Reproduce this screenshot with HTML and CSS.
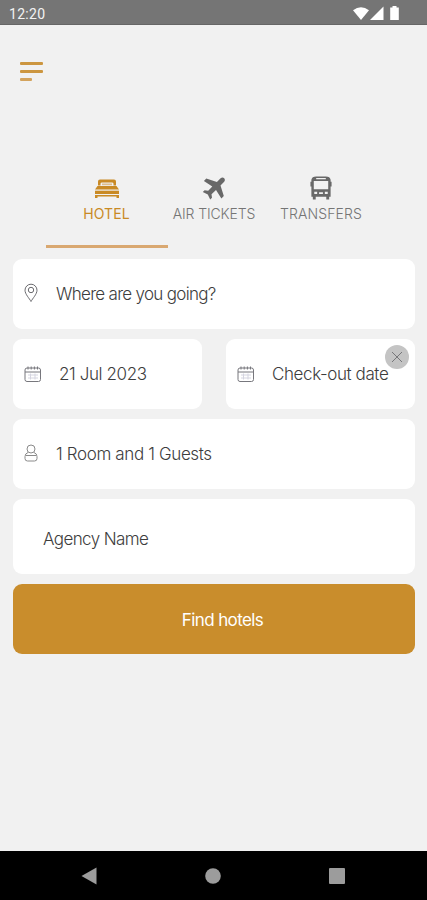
FILE: index.html
```html
<!DOCTYPE html>
<html lang="en">
<head>
    <meta charset="UTF-8">
    <meta name="viewport" content="width=device-width, initial-scale=1.0">
    <title>Find hotels</title>
    <link rel="stylesheet" href="styles.css">
</head>
<body>
    <div class="status">
        <span class="time">12:20</span>
        <svg class="signals" width="48" height="16" viewBox="0 0 48 16">
            <path d="M0 4.3Q8 -2 16 4.3L8 14z"/>
            <path d="M30.500 0.500V14H17z"/>
            <path d="M39.500 0h4v1.500h2.300V14h-8.600V1.500h2.300z"/>
        </svg>
    </div>
    <div class="header">
        <div class="menu">
            <span></span>
            <span></span>
            <span class="short"></span>
        </div>
    </div>
    <ul class="tabs">
        <li class="active">
            <svg width="26" height="24" viewBox="0 0 26 24">
                <path d="M4 9V5Q4 3 6 3H20Q22 3 22 5V9H19.500V7.300Q19.500 6 18 6H8Q6.500 6 6.500 7.300V9z"/>
                <path d="M8 7h10v1.700H8z" opacity=".5"/>
                <path d="M3.500 9.500h19l2.500 3.500H1z"/>
                <path d="M1 14.200h24v3.300H1z"/>
                <path d="M1 18.500h24V21.500h-2.500V20h-19v1.500H1z"/>
            </svg>
            <span class="label hotel">HOTEL</span>
        </li>
        <li>
            <svg width="24" height="24" viewBox="0 0 24 24">
                <path d="M22.200 1.700Q20.400 .1 18.300 2.100L14.900 5.500L4.300 2.100L1.900 4.400L10.300 9.900L6.200 14.200L2.600 13.700L.8 15.500L5.800 18L8.200 23L10 21.200L9.500 17.700L14 13.500L19.400 22L21.800 19.600L18.500 9.100L21.700 5.800Q23.800 3.600 22.200 1.700z"/>
            </svg>
            <span class="label air">AIR TICKETS</span>
        </li>
        <li>
            <svg width="24" height="26" viewBox="0 0 24 26">
                <path fill-rule="evenodd" d="M7 .5H17Q21.500 .5 22 4V6H23V11H22V21.500H20.500V24.500H17.500V21.500H6.500V24.500H3.500V21.500H2V11H1V6H2V4Q2.500 .5 7 .5zM7 2.200V3.300H17V2.200zM4.500 5.300V13.800H19.500V5.300zM5 16.300V18.800H8V16.300zM16 16.300V18.800H19V16.300zM10 17V18.700H14V17z"/>
            </svg>
            <span class="label transfers">TRANSFERS</span>
        </li>
    </ul>
    <div class="form">
        <div class="card">
            <svg class="icon pin" width="14" height="20" viewBox="0 0 14 20">
                <path d="M7 18.500C5.500 15.500 1 11.200 1 7.200A6 6 0 0 1 13 7.200C13 11.200 8.500 15.500 7 18.500z"/>
                <circle cx="7" cy="7" r="2.700"/>
            </svg>
            <span class="where">Where are you going?</span>
        </div>
        <div class="dates">
            <div class="card">
                <svg class="icon calendar" width="18" height="17" viewBox="0 0 18 17">
                    <rect x="1" y="2" width="15.500" height="13.500" rx="2"/>
                    <path d="M1 6H16.500M4 .5V3.500M7.200 .5V3.500M10.400 .5V3.500M13.500 .5V3.500"/>
                    <path class="days" d="M4 9H14M4 12H14M6.500 7.500V13.500M11 7.500V13.500"/>
                </svg>
                <span class="checkin">21 Jul 2023</span>
            </div>
            <div class="card">
                <svg class="icon calendar" width="18" height="17" viewBox="0 0 18 17">
                    <rect x="1" y="2" width="15.500" height="13.500" rx="2"/>
                    <path d="M1 6H16.500M4 .5V3.500M7.200 .5V3.500M10.400 .5V3.500M13.500 .5V3.500"/>
                    <path class="days" d="M4 9H14M4 12H14M6.500 7.500V13.500M11 7.500V13.500"/>
                </svg>
                <span class="checkout">Check-out date</span>
                <svg class="clear" width="24" height="24" viewBox="0 0 24 24">
                    <circle cx="12" cy="12" r="12"/>
                    <path d="M7 7L17 17M17 7L7 17"/>
                </svg>
            </div>
        </div>
        <div class="card">
            <svg class="icon person" width="14" height="19" viewBox="0 0 14 19">
                <circle cx="7" cy="5" r="4"/>
                <path d="M4 8.500Q1 9.500 1 12.500V14.500Q1 17 3.500 17H10.500Q13 17 13 14.500V12.500Q13 9.500 10 8.500M2 11.500H12"/>
            </svg>
            <span class="guests">1 Room and 1 Guests</span>
        </div>
        <div class="card agency">
            <span class="name">Agency Name</span>
        </div>
        <div class="button"><span>Find hotels</span></div>
    </div>
    <div class="nav">
        <svg width="16" height="18" viewBox="0 0 16 18"><path d="M15.500 .5V17.500L.5 9z"/></svg>
        <svg width="16" height="16" viewBox="0 0 16 16"><circle cx="8" cy="8" r="7.800"/></svg>
        <svg width="16" height="16" viewBox="0 0 16 16"><rect width="16" height="16" rx="1"/></svg>
    </div>
</body>
</html>
```

FILE: styles.css
```css
*{
    box-sizing:border-box;
}
body{
    margin:0;
    height:900px;
    display:flex;
    flex-direction:column;
    background:#f1f1f1;
    font-family:Inter,"Liberation Sans",sans-serif;
    font-weight:300;
    color:#3d3d3d;
    overflow:hidden;
}
svg{
    display:block;
    flex:none;
}
.status{
    height:25px;
    padding:0 26px 0 9px;
    display:flex;
    justify-content:space-between;
    align-items:center;
    background:#757575;
    border-bottom:1px solid #666;
}
.time{
    font:400 14px/24px Roboto,sans-serif;
    letter-spacing:.3px;
    padding-top:3px;
    color:#f2f2f2;
}
.signals{
    fill:#fff;
    margin-top:4px;
}
.header{
    height:151px;
    padding:37px 20px 0;
}
.menu span{
    display:block;
    width:23px;
    height:3px;
    margin-bottom:5px;
    border-radius:1px;
    background:#cc9640;
}
.menu .short{
    width:12px;
    background:#d3a35d;
}
.tabs{
    height:72px;
    margin:0;
    padding:0 53px;
    display:flex;
    list-style:none;
}
.tabs li{
    flex:1;
    display:flex;
    flex-direction:column;
    align-items:center;
    color:#757575;
    fill:#686868;
    position:relative;
}
.tabs svg{
    height:25px;
}
.tabs .active{
    color:#c98a25;
    fill:#c98a25;
    font-weight:400;
}
.tabs .active::after{
    content:"";
    position:absolute;
    left:-7px;
    right:-8px;
    bottom:0;
    height:3px;
    background:#d9a871;
}
.label{
    margin-top:4px;
    font-size:14px;
    line-height:18px;
    white-space:nowrap;
}
.hotel{
    letter-spacing:.1px;
}
.air{
    letter-spacing:-.1px;
    padding-left:1px;
}
.transfers{
    letter-spacing:.1px;
    padding-left:1px;
}
.form{
    padding:11px 12px 0 13px;
    display:flex;
    flex-direction:column;
    gap:10px;
}
.card{
    height:70px;
    padding-left:11px;
    display:flex;
    align-items:center;
    background:#fff;
    border-radius:9px;
    font-size:17px;
    line-height:22px;
    white-space:nowrap;
    position:relative;
}
.icon{
    fill:none;
    stroke:#6c6c70;
    stroke-width:1;
}
.calendar{
    margin-top:1px;
    stroke:#77777d;
}
.days{
    stroke:#d5d5e0;
}
.pin{
    margin-bottom:2px;
}
.person{
    stroke:#8a8a8a;
    margin-bottom:2px;
}
.where{
    margin-left:18px;
    letter-spacing:-.7px;
}
.dates{
    display:grid;
    grid-template-columns:189px 189px;
    justify-content:space-between;
}
.dates .card{
    padding-left:11px;
}
.checkin{
    margin-left:17px;
    letter-spacing:-.4px;
}
.checkout{
    margin-left:17px;
    letter-spacing:-.4px;
}
.clear{
    position:absolute;
    top:6px;
    right:6px;
    fill:#c4c4c4;
    stroke:#77777a;
}
.clear circle{
    stroke:none;
}
.guests{
    margin-left:18px;
    letter-spacing:-.36px;
}
.agency{
    height:75px;
    padding:5px 0 0 30px;
}
.name{
    letter-spacing:-.6px;
}
.button{
    height:70px;
    display:flex;
    align-items:center;
    justify-content:center;
    background:#c98d2c;
    border-radius:9px;
    color:#fff;
    font-size:17px;
    font-weight:400;
}
.button span{
    padding:1px 0 0 17px;
    letter-spacing:-.6px;
}
.nav{
    height:49px;
    margin-top:auto;
    padding:0 82px 0 81px;
    display:flex;
    justify-content:space-between;
    align-items:center;
    background:#000;
    fill:#9c9c9c;
}
```
